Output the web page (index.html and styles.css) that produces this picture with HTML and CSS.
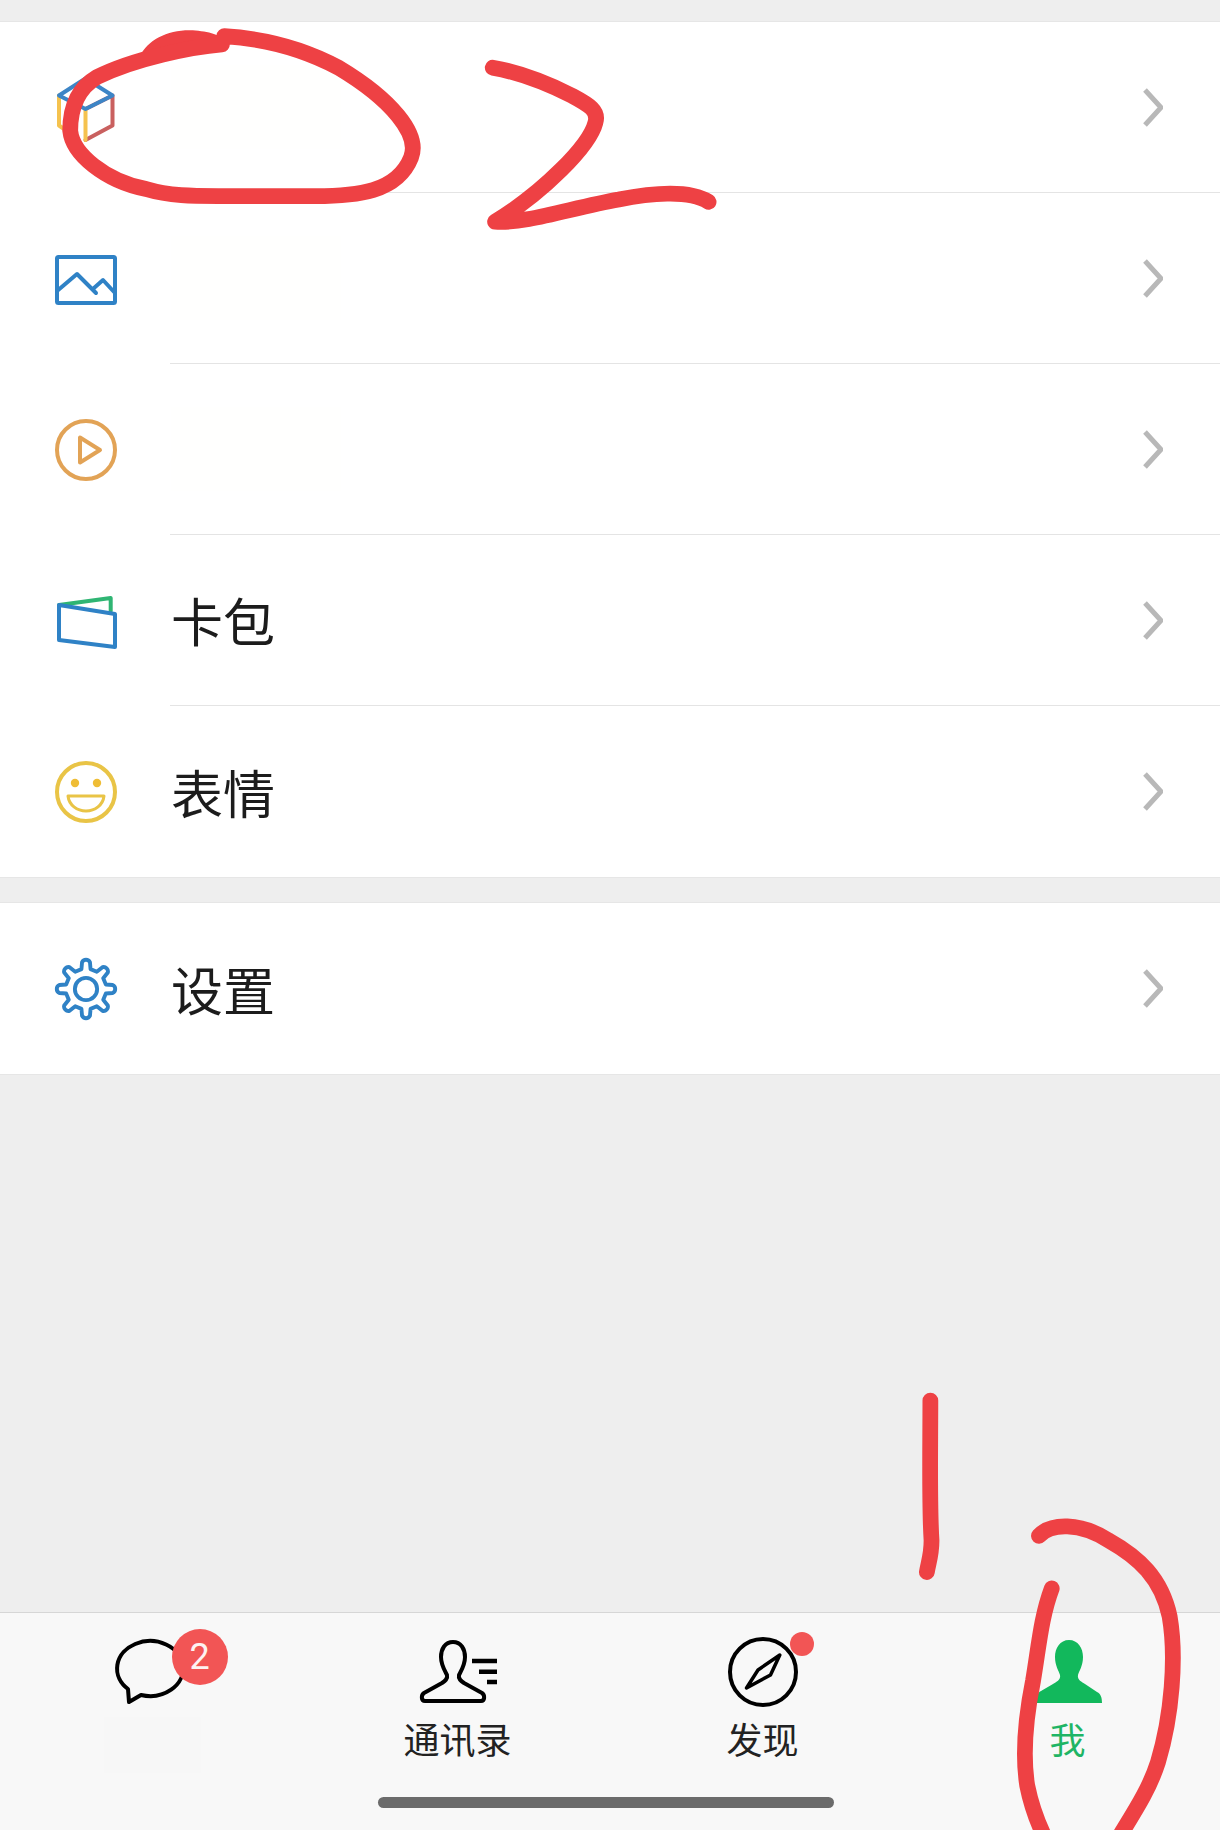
FILE: index.html
```html
<!DOCTYPE html>
<html lang="zh-CN">
<head>
<meta charset="utf-8">
<title>我</title>
<link rel="stylesheet" href="styles.css">
</head>
<body>
<div class="screen">
  <main class="content">
    <section class="group">
      <div class="row">
        <svg class="row-icon" viewBox="0 0 62 62">
          <path class="ln-red" d="M30.5 32L57.5 18.5V48.5L30.5 63"/>
          <path class="ln-yellow" d="M4 18.5V48.5L12 54M30.5 32V63"/>
          <path class="ln-blue-thin" d="M4 18.5L30.5 1.5L57.5 18.5L30.5 32Z"/>
        </svg>
        <div class="row-body"><span class="masked"></span><svg class="chev" viewBox="0 0 20 39"><path d="M2 2L18 19.5L2 37"/></svg></div>
      </div>
      <div class="row">
        <svg class="row-icon" viewBox="0 0 62 62">
          <rect class="ln-blue" x="2" y="9" width="58" height="46" rx="1.5"/>
          <path class="ln-blue" d="M2 43L22 26L41 45M39 40L48 32L60 45"/>
        </svg>
        <div class="row-body"><span class="masked"></span><svg class="chev" viewBox="0 0 20 39"><path d="M2 2L18 19.5L2 37"/></svg></div>
      </div>
      <div class="row">
        <svg class="row-icon" viewBox="0 0 62 62">
          <circle class="ln-orange" cx="31" cy="31" r="29"/>
          <path class="ln-orange" d="M25 18.5V43.5L45 31Z"/>
        </svg>
        <div class="row-body"><span class="masked"></span><svg class="chev" viewBox="0 0 20 39"><path d="M2 2L18 19.5L2 37"/></svg></div>
      </div>
      <div class="row">
        <svg class="row-icon" viewBox="0 0 62 62">
          <path class="ln-green" d="M4 15L55.7 8V21"/>
          <path class="ln-blue" d="M4 15L60 24V57L4 50Z"/>
        </svg>
        <div class="row-body"><span class="row-label">卡包</span><svg class="chev" viewBox="0 0 20 39"><path d="M2 2L18 19.5L2 37"/></svg></div>
      </div>
      <div class="row row-last">
        <svg class="row-icon" viewBox="0 0 62 62">
          <circle class="ln-gold" cx="31" cy="31" r="29"/>
          <circle class="fill-gold" cx="20" cy="22" r="4.2"/>
          <circle class="fill-gold" cx="42" cy="22" r="4.2"/>
          <path class="ln-gold-thin" d="M13 35H49C48 44 40 50 31 50C22 50 14 44 13 35Z"/>
        </svg>
        <div class="row-body"><span class="row-label">表情</span><svg class="chev" viewBox="0 0 20 39"><path d="M2 2L18 19.5L2 37"/></svg></div>
      </div>
    </section>
    <section class="group group-second">
      <div class="row row-last">
        <svg class="row-icon" viewBox="-32 -32 64 64">
          <path class="ln-blue" d="M-4.7 -20.5L-4.1 -27.5A4.5 4.5 0 0 1 4.1 -27.5L4.7 -20.5L11.1 -17.8L17 -22.5A4.5 4.5 0 0 1 22.5 -17L17.8 -11.1L20.5 -4.7L27.5 -4.1A4.5 4.5 0 0 1 27.5 4.1L20.5 4.7L17.8 11.1L22.5 17A4.5 4.5 0 0 1 17 22.5L11.1 17.8L4.7 20.5L4.1 27.5A4.5 4.5 0 0 1 -4.1 27.5L-4.7 20.5L-11.1 17.8L-17 22.5A4.5 4.5 0 0 1 -22.5 17L-17.8 11.1L-20.5 4.7L-27.5 4.1A4.5 4.5 0 0 1 -27.5 -4.1L-20.5 -4.7L-17.8 -11.1L-22.5 -17A4.5 4.5 0 0 1 -17 -22.5L-11.1 -17.8Z"/>
          <circle class="ln-blue" cx="0" cy="0" r="11.5"/>
        </svg>
        <div class="row-body"><span class="row-label">设置</span><svg class="chev" viewBox="0 0 20 39"><path d="M2 2L18 19.5L2 37"/></svg></div>
      </div>
    </section>
  </main>
  <footer class="tabbar">
    <nav class="tabs">
      <div class="tab">
        <div class="tab-icon">
          <svg class="tab-svg" viewBox="0 0 80 64"><path class="ln-black" d="M15 49L16 62L28 55A33 27.5 0 1 0 15 49Z"/></svg>
          <span class="badge">2</span>
        </div>
        <span class="tab-masked"></span>
      </div>
      <div class="tab">
        <div class="tab-icon">
          <svg class="tab-svg" viewBox="0 0 80 64">
            <path class="ln-black" d="M35 2C27 2 23 9 23 17C23 25 27 31 29 35C30 39 27 41 24 43L6 53C3 55 3 61 7 61H63C67 61 67 55 64 53L46 43C43 41 40 39 41 35C43 31 47 25 47 17C47 9 43 2 35 2Z"/>
            <path class="ln-black-bars" d="M54 21H79M61 31.7H79M69 42H79"/>
          </svg>
        </div>
        <span class="tab-label">通讯录</span>
      </div>
      <div class="tab">
        <div class="tab-icon">
          <svg class="tab-svg" viewBox="0 0 80 64">
            <circle class="ln-black" cx="40" cy="32" r="33"/>
            <path class="ln-black-needle" d="M56.8 15L47.5 35L23.5 48L35 30Z"/>
          </svg>
          <span class="dot"></span>
        </div>
        <span class="tab-label">发现</span>
      </div>
      <div class="tab">
        <div class="tab-icon">
          <svg class="tab-svg" viewBox="0 0 80 64"><path class="fill-green" d="M41 0C32 0 27 8 27 17C27 26 31 31 32 35C33 40 28 42 25 44L13 51C9 53 8 57 8 63H74C74 58 73 54 69 52L57 44C54 42 49 40 50 35C51 31 55 26 55 17C55 8 50 0 41 0Z"/></svg>
        </div>
        <span class="tab-label tab-label-active">我</span>
      </div>
    </nav>
    <div class="home-bar"></div>
  </footer>
  <svg class="scribble" viewBox="0 0 1045 1568">
    <path class="ink-blob" d="M120 48C126 34 145 25 165 26C178 27 191 30 193 36C191 44 175 46 160 48C145 50 130 54 120 48Z"/>
    <path class="ink" d="M190 38C165 40 115 50 83 66C66 76 60 92 60 112C62 132 90 155 125 162C145 168 165 168 187 168H270C305 168 340 165 352 135C360 115 335 85 290 58C260 42 225 33 192 31"/>
    <path class="ink" d="M422 58C445 62 470 72 490 82C505 90 513 95 510 105C505 125 465 165 424 190C450 192 490 178 530 171C555 166 590 162 607 173"/>
    <path class="ink" d="M797 1200C797 1240 796 1290 798 1320C798 1333 795 1340 794 1347"/>
    <path class="ink" d="M890 1316C900 1305 925 1304 950 1320C975 1334 995 1352 1002 1385C1008 1420 1004 1470 992 1510C984 1535 970 1555 955 1580"/>
    <path class="ink" d="M901 1361C892 1385 890 1410 885 1440C878 1475 876 1505 880 1530C884 1550 890 1565 898 1580"/>
  </svg>
</div>
</body>
</html>
```
FILE: styles.css
```css
* {
  box-sizing: border-box;
}

html,
body {
  margin: 0;
  padding: 0;
}

body {
  background: #eeeeee;
  font-family: "Noto Sans CJK SC", "Noto Sans", sans-serif;
}

.screen {
  position: relative;
  display: flex;
  flex-direction: column;
  width: 1220px;
  height: 1830px;
  overflow: hidden;
  background: #eeeeee;
}

.content {
  flex: 1;
  padding-top: 21px;
}

.group {
  background: #ffffff;
  border-top: 1px solid #e6e6e6;
  border-bottom: 1px solid #e6e6e6;
}

.group-second {
  margin-top: 24px;
}

.row {
  display: flex;
  align-items: center;
  height: 171px;
  padding-left: 55px;
}

.row-icon {
  flex: none;
  width: 62px;
  height: 62px;
  overflow: visible;
}

.row-body {
  flex: 1;
  display: flex;
  align-items: center;
  justify-content: space-between;
  align-self: stretch;
  margin-left: 53px;
  padding: 0 57px 0 1px;
  border-bottom: 1px solid #e4e4e4;
}

.row-label {
  font-size: 52px;
  line-height: 60px;
  color: #1c1c1c;
}

.row-last .row-body {
  border-bottom: none;
}

.masked {
  width: 170px;
  height: 84px;
  background: #fffffe;
}

.chev {
  flex: none;
  width: 20px;
  height: 39px;
  fill: none;
  stroke: #b8b8b8;
  stroke-width: 5;
}

.ln-red,
.ln-yellow,
.ln-blue,
.ln-blue-thin,
.ln-green,
.ln-orange,
.ln-gold,
.ln-gold-thin,
.ln-black,
.ln-black-bars,
.ln-black-needle {
  fill: none;
  stroke-width: 4;
  stroke-linejoin: round;
  stroke-linecap: round;
}

.ln-red { stroke: #c9605f; }
.ln-yellow { stroke: #f5c24e; }
.ln-blue { stroke: #2f82c6; }
.ln-blue-thin { stroke: #3d85c6; }
.ln-green { stroke: #2fb573; }
.ln-orange { stroke: #e2a356; }
.ln-gold { stroke: #e9c446; }
.ln-gold-thin { stroke: #e9c446; stroke-width: 3; }
.fill-gold { fill: #efbd35; }

.tabbar {
  flex: none;
  height: 218px;
  background: #f8f8f8;
  border-top: 1px solid #d6d6d6;
}

.tabs {
  display: grid;
  grid-template-columns: repeat(4, 1fr);
  height: 184px;
  padding-top: 27px;
}

.tab {
  display: flex;
  flex-direction: column;
  align-items: center;
}

.tab-icon {
  position: relative;
  width: 80px;
  height: 64px;
}

.tab-svg {
  display: block;
  width: 80px;
  height: 64px;
  overflow: visible;
}

.ln-black { stroke: #000000; }
.ln-black-bars { stroke: #000000; stroke-width: 4.5; stroke-linecap: butt; }
.ln-black-needle { stroke: #000000; stroke-width: 3.5; }
.fill-green { fill: #12b85c; }

.badge {
  position: absolute;
  left: 59px;
  top: -11px;
  width: 56px;
  height: 56px;
  border-radius: 50%;
  background: #f25555;
  color: #fdf2f2;
  font-family: Roboto, "Liberation Sans", sans-serif;
  font-size: 36px;
  line-height: 56px;
  text-align: center;
}

.dot {
  position: absolute;
  left: 67px;
  top: -8px;
  width: 24px;
  height: 24px;
  border-radius: 50%;
  background: #f25555;
}

.tab-label {
  margin-top: 12px;
  font-size: 36px;
  line-height: 44px;
  color: #222222;
}

.tab-label-active {
  color: #1fb565;
}

.tab-masked {
  width: 97px;
  height: 56px;
  margin-top: 13px;
  background: #f7f7f7;
}

.home-bar {
  width: 456px;
  height: 11px;
  margin-left: 378px;
  border-radius: 6px;
  background: #6b6b6b;
}

.scribble {
  position: absolute;
  left: 0;
  top: 0;
  width: 1220px;
  height: 1830px;
  pointer-events: none;
}

.ink {
  fill: none;
  stroke: #ee4144;
  stroke-width: 13.5;
  stroke-linecap: round;
  stroke-linejoin: round;
}

.ink-blob {
  fill: #ee4144;
}
```
